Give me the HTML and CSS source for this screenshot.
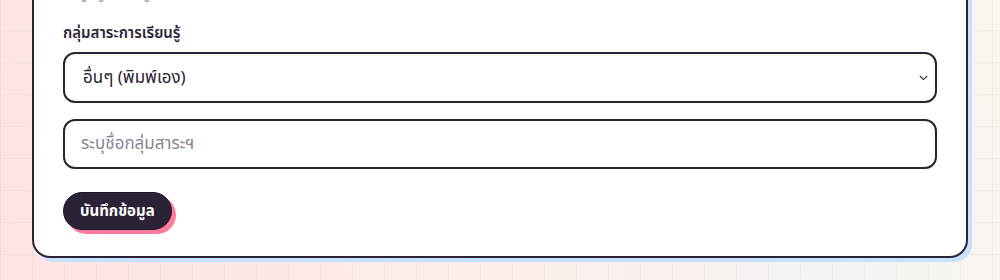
FILE: index.html
```html
<!DOCTYPE html>
<html lang="th">
<head>
  <meta charset="UTF-8" />
  <meta name="viewport" content="width=device-width, initial-scale=1.0" />
  <title>บันทึกข้อมูลครู</title>
  <link rel="stylesheet" href="styles.css">
</head>
<body>
  <main class="page">
    <form action="" class="teacher-card">
      <p class="hint">ข้อมูลผู้สอนจะถูกบันทึกไว้ในระบบของโรงเรียน</p>

      <div class="field">
        <label for="subject" class="field-label">กลุ่มสาระการเรียนรู้</label>
        <div class="select-wrap">
          <select id="subject" class="field-control">
            <option value="">เลือกกลุ่มสาระ</option>
            <option value="th">ภาษาไทย</option>
            <option value="math">คณิตศาสตร์</option>
            <option value="sci">วิทยาศาสตร์และเทคโนโลยี</option>
            <option value="other" selected>อื่นๆ (พิมพ์เอง)</option>
          </select>
          <svg class="select-arrow" width="9" height="6" viewBox="0 0 9 6" aria-hidden="true">
            <path d="M0.8 1 L4.5 4.6 L8.2 1" fill="none" stroke="#2b2334" stroke-width="1.1" />
          </svg>
        </div>
      </div>

      <div class="field">
        <input type="text" id="subject-other" class="field-control" placeholder="ระบุชื่อกลุ่มสาระฯ" />
      </div>

      <div class="actions">
        <button type="submit" class="btn-save">บันทึกข้อมูล</button>
      </div>
    </form>
  </main>
</body>
</html>
```

FILE: styles.css
```css
/* พื้นหลังหน้า */
html,
body {
  margin: 0;
  height: 100%;
}

body {
  font-family: "Noto Sans Thai", "Noto Sans", "DejaVu Sans", sans-serif;
  color: #2b2334;
  background-color: #fbf4ef;
  background-image:
    linear-gradient(rgba(0, 0, 0, 0.035) 1px, transparent 1px),
    linear-gradient(90deg, rgba(0, 0, 0, 0.035) 1px, transparent 1px),
    linear-gradient(70deg, #fde3e1 0%, #fceeea 45%, #f5f3f1 75%, #fbf5ef 100%);
  background-size: 32px 32px, 32px 32px, 100% 100%;
  background-position: 0 -2px, 0 0, 0 0;
  overflow: hidden;
}

.page {
  padding: 0 32px;
}

/* การ์ดฟอร์ม */
.teacher-card {
  margin-top: -30px;
  background: #fff;
  border: 2px solid #2b2334;
  border-radius: 18px;
  box-shadow: 4px 4px 0 #c9e2fb;
  padding: 12px 29px 26px;
}

.hint {
  margin: 0 0 19px;
  font-size: 14px;
  line-height: 20px;
  color: #8b8494;
}

.field {
  margin-bottom: 16px;
}

.field-label {
  display: block;
  font-size: 15px;
  font-weight: 600;
  line-height: 22px;
  margin-bottom: 7px;
}

.field-control {
  display: block;
  width: 100%;
  box-sizing: border-box;
  font-family: inherit;
  font-size: 17px;
  color: #2b2334;
  background: #fff;
  border: 2px solid #2b2334;
  border-radius: 12px;
  outline: none;
}

.select-wrap {
  position: relative;
}

select.field-control {
  appearance: none;
  -webkit-appearance: none;
  height: 51px;
  padding: 0 28px 0 18px;
}

.select-arrow {
  position: absolute;
  right: 9px;
  top: 23px;
  pointer-events: none;
}

input.field-control {
  height: 50px;
  padding: 0 16px;
}

input.field-control::placeholder {
  color: #8b8494;
}

/* ปุ่มบันทึก */
.actions {
  padding-top: 7px;
}

.btn-save {
  font-family: inherit;
  font-size: 15px;
  font-weight: 700;
  color: #fff;
  background: #2b2236;
  border: 1px solid #1f1828;
  border-radius: 999px;
  height: 38px;
  padding: 0 16px;
  box-shadow: 4px 4px 0 #ff7a9b;
  cursor: pointer;
}
```
